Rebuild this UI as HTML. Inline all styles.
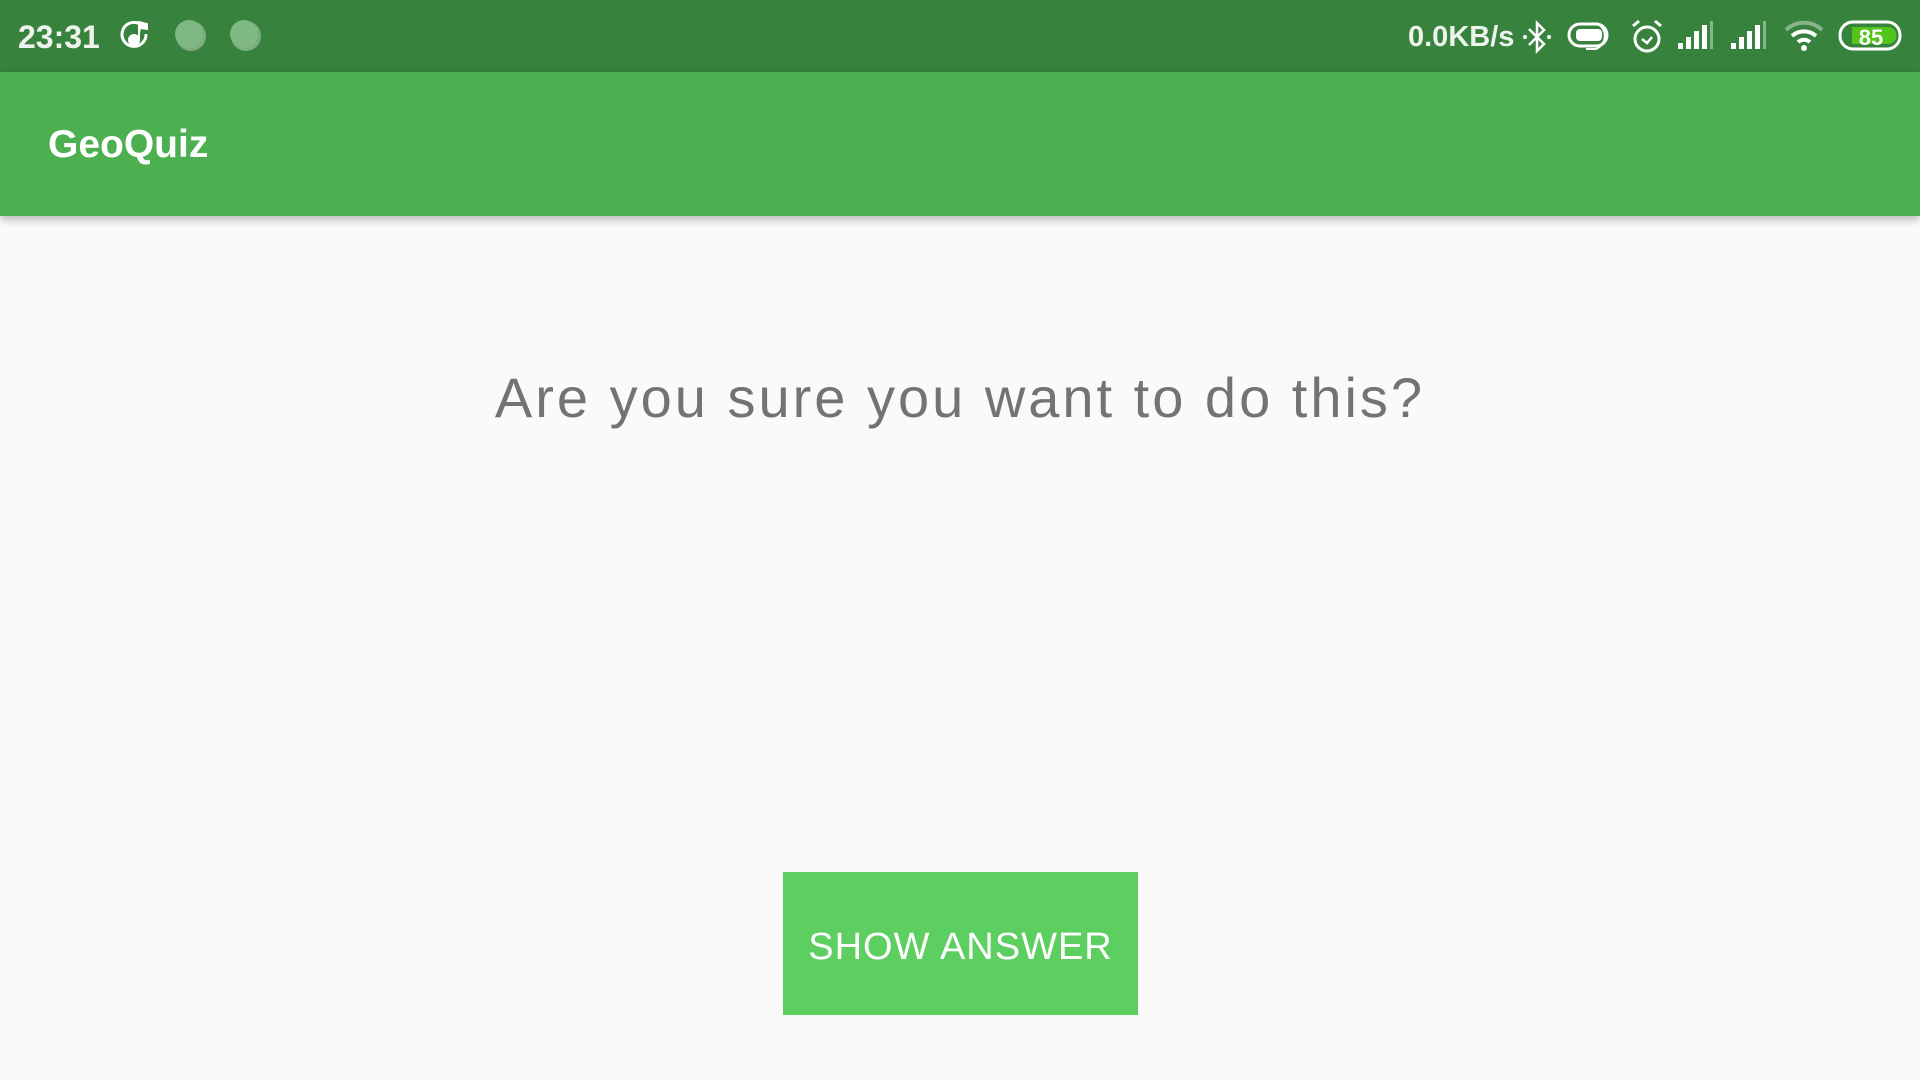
<!DOCTYPE html>
<html><head><meta charset="utf-8"><style>
html,body{margin:0;padding:0;width:1920px;height:1080px;overflow:hidden;background:#fafafa;font-family:"Liberation Sans",sans-serif;}
.sb{position:absolute;left:0;top:0;width:1920px;height:72px;background:#37823c;color:#eef3ee;}
.tb{position:absolute;left:0;top:72px;width:1920px;height:144px;background:#4caf50;box-shadow:0 4px 8px rgba(0,0,0,0.25);}
.title{position:absolute;left:48px;top:123px;font-size:39px;font-weight:bold;color:#fff;}
.q{position:absolute;left:0;width:1920px;top:365px;text-align:center;font-size:56px;letter-spacing:3px;color:#737373;}
.btn{position:absolute;left:783px;top:876px;width:355px;height:143px;color:#fff;font-size:38px;letter-spacing:1px;text-align:center;line-height:143px;}
.bg{position:absolute;left:783px;top:872px;width:355px;height:143px;background:#5ccf60;}
</style></head><body>
<div class="sb">
<div style="position:absolute;left:18px;top:19px;font-size:32px;font-weight:bold;">23:31</div>
<svg style="position:absolute;left:118px;top:18px" width="36" height="36" viewBox="0 0 36 36"><path d="M22 6 a12 12 0 1 0 6 10" stroke="#fff" stroke-width="3" fill="none"/><circle cx="16" cy="22" r="6" fill="#fff"/><path d="M21 22 V4 l8 2 v5 l-6 -1" fill="#fff" stroke="#fff" stroke-width="2"/></svg>
<svg style="position:absolute;left:172px;top:18px" width="40" height="36"><circle cx="19" cy="18" r="15" fill="#fff" opacity="0.35"/><circle cx="17" cy="16" r="14" fill="#7fb882"/></svg>
<svg style="position:absolute;left:227px;top:18px" width="40" height="36"><circle cx="19" cy="18" r="15" fill="#fff" opacity="0.35"/><circle cx="17" cy="16" r="14" fill="#7fb882"/></svg>
<div style="position:absolute;left:1408px;top:21px;font-size:29px;font-weight:bold;">0.0KB/s</div>
<svg style="position:absolute;left:1522px;top:20px" width="30" height="34" viewBox="0 0 30 34"><path d="M7 9 L22 24 L15 31 V3 L22 10 L7 25" stroke="#fff" stroke-width="2.5" fill="none"/><circle cx="3" cy="17" r="2" fill="#fff"/><circle cx="27" cy="17" r="2" fill="#fff"/></svg>
<svg style="position:absolute;left:1566px;top:20px" width="50" height="34"><rect x="3" y="4" width="38" height="22" rx="11" stroke="#fff" stroke-width="3" fill="none"/><rect x="10" y="9" width="26" height="12" rx="4" fill="#fff"/><path d="M30 3 a14 14 0 0 1 0 26 h-10" stroke="#fff" stroke-width="2" fill="none"/></svg>
<svg style="position:absolute;left:1629px;top:18px" width="36" height="36"><circle cx="18" cy="21" r="12" stroke="#fff" stroke-width="3" fill="none"/><path d="M13 21 l5 4 l5 -6" stroke="#fff" stroke-width="2.5" fill="none"/><path d="M4 8 l6 -5 M32 8 l-6 -5" stroke="#fff" stroke-width="3"/></svg>
<svg style="position:absolute;left:1678px;top:20px" width="40" height="30"><rect x="0" y="23" width="5" height="6" fill="#fff"/><rect x="8" y="17" width="5" height="12" fill="#fff"/><rect x="16" y="11" width="5" height="18" fill="#fff"/><rect x="24" y="5" width="5" height="24" fill="#fff"/><rect x="32" y="1" width="3" height="28" fill="#fff" opacity="0.4"/></svg>
<svg style="position:absolute;left:1731px;top:20px" width="40" height="30"><rect x="0" y="23" width="5" height="6" fill="#fff"/><rect x="8" y="17" width="5" height="12" fill="#fff"/><rect x="16" y="11" width="5" height="18" fill="#fff"/><rect x="24" y="5" width="5" height="24" fill="#fff"/><rect x="32" y="1" width="3" height="28" fill="#fff" opacity="0.4"/></svg>
<svg style="position:absolute;left:1784px;top:20px" width="40" height="32"><path d="M2 10 a26 26 0 0 1 36 0" stroke="#fff" stroke-width="4" fill="none" opacity="0.4"/><path d="M8 16 a18 18 0 0 1 24 0" stroke="#fff" stroke-width="4" fill="none"/><path d="M14 22 a9 9 0 0 1 12 0" stroke="#fff" stroke-width="4" fill="none"/><circle cx="20" cy="28" r="3" fill="#fff"/></svg>
<svg style="position:absolute;left:1838px;top:19px" width="66" height="34"><rect x="2" y="3" width="60" height="27" rx="13" stroke="#fff" stroke-width="3" fill="none"/><path d="M14 8 h36 a8 8 0 0 1 0 17 h-36 z" fill="#52c41a"/><text x="33" y="26" text-anchor="middle" font-family="Liberation Sans" font-weight="bold" font-size="22" fill="#fff">85</text></svg>
</div>
<div class="tb"></div>
<div class="title">GeoQuiz</div>
<div class="q">Are you sure you want to do this?</div>
<div class="bg"></div>
<div class="btn">SHOW ANSWER</div>
</body></html>
